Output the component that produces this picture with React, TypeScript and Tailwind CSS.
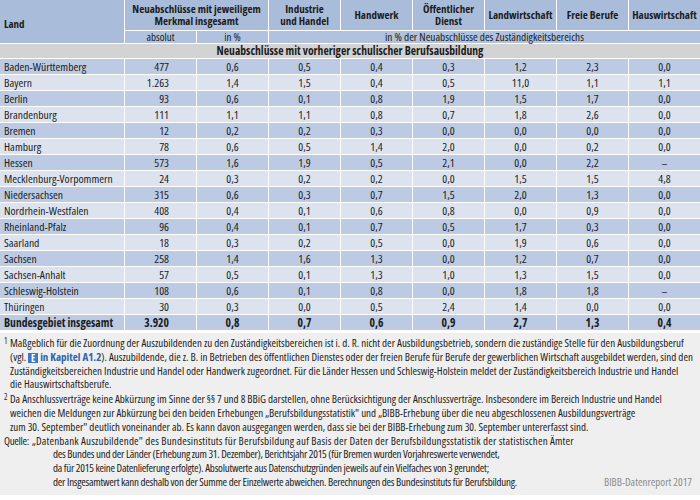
const FONT = { fontFamily: "'Open Sans', sans-serif" };

type Row = string[];

const rows: Row[] = [
  ["Baden-Württemberg", "477", "0,6", "0,5", "0,4", "0,3", "1,2", "2,3", "0,0"],
  ["Bayern", "1.263", "1,4", "1,5", "0,4", "0,5", "11,0", "1,1", "1,1"],
  ["Berlin", "93", "0,6", "0,1", "0,8", "1,9", "1,5", "1,7", "0,0"],
  ["Brandenburg", "111", "1,1", "1,1", "0,8", "0,7", "1,8", "2,6", "0,0"],
  ["Bremen", "12", "0,2", "0,2", "0,3", "0,0", "0,0", "0,0", "0,0"],
  ["Hamburg", "78", "0,6", "0,5", "1,4", "2,0", "0,0", "0,2", "0,0"],
  ["Hessen", "573", "1,6", "1,9", "0,5", "2,1", "0,0", "2,2", "–"],
  ["Mecklenburg-Vorpommern", "24", "0,3", "0,2", "0,2", "0,0", "1,5", "1,5", "4,8"],
  ["Niedersachsen", "315", "0,6", "0,3", "0,7", "1,5", "2,0", "1,3", "0,0"],
  ["Nordrhein-Westfalen", "408", "0,4", "0,1", "0,6", "0,8", "0,0", "0,9", "0,0"],
  ["Rheinland-Pfalz", "96", "0,4", "0,1", "0,7", "0,5", "1,7", "0,3", "0,0"],
  ["Saarland", "18", "0,3", "0,2", "0,5", "0,0", "1,9", "0,6", "0,0"],
  ["Sachsen", "258", "1,4", "1,6", "1,3", "0,0", "1,2", "0,7", "0,0"],
  ["Sachsen-Anhalt", "57", "0,5", "0,1", "1,3", "1,0", "1,3", "1,5", "0,0"],
  ["Schleswig-Holstein", "108", "0,6", "0,1", "0,8", "0,0", "1,8", "1,8", "–"],
  ["Thüringen", "30", "0,3", "0,0", "0,5", "2,4", "1,4", "0,0", "0,0"],
  ["Bundesgebiet insgesamt", "3.920", "0,8", "0,7", "0,6", "0,9", "2,7", "1,3", "0,4"],
];

const heads = ["Industrie\nund Handel", "Handwerk", "Öffentlicher\nDienst", "Landwirtschaft", "Freie Berufe", "Hauswirtschaft"];

const App = () => {
  return (
    <div className="w-[700px] h-[500px] bg-white text-[#1c1c1c] overflow-hidden font-stretch-condensed" style={FONT}>
      <div className="grid grid-cols-[124px_repeat(8,1fr)] gap-px bg-white text-[11px] leading-[12px] whitespace-nowrap">
        <div className="row-span-2 bg-[#a9bcd9] font-bold flex items-center pl-1 pt-1">Land</div>
        <div className="col-span-2 h-[30px] bg-[#a9bcd9] font-bold flex items-center justify-center text-center">
          Neuabschlüsse mit jeweiligem<br />Merkmal insgesamt
        </div>
        {heads.map(h => (
          <div key={h} className="h-[30px] bg-[#a9bcd9] font-bold flex items-center justify-center text-center whitespace-pre-line">
            {h}
          </div>
        ))}
        <div className="h-[12px] bg-[#b0c2dd] flex items-center justify-center">absolut</div>
        <div className="h-[12px] bg-[#b0c2dd] flex items-center justify-center">in %</div>
        <div className="col-span-6 h-[12px] bg-[#b0c2dd] flex items-center justify-center text-[11.3px]">in % der Neuabschlüsse des Zuständigkeitsbereichs</div>
        <div className="col-span-9 h-[14px] bg-[#d3d3d3] font-bold flex items-center justify-center text-[11.6px]">
          Neuabschlüsse mit vorheriger schulischer Berufsausbildung
        </div>
        {rows.map((r, i) => {
          const bg = i % 2 === 0 ? "bg-[#bccae3]" : "bg-[#dce3ef]";
          const bold = i === rows.length - 1 ? "font-bold" : "";
          return r.map((c, j) => (
            <div
              key={i + "-" + j}
              className={`h-[15px] text-[11.6px] ${bg} ${bold} flex items-center ${j === 0 ? "pl-1" : j === 1 ? "justify-end pr-[27px]" : "justify-center"}`}
            >
              {c}
            </div>
          ));
        })}
      </div>

      <div className="mt-[3px] bg-[#efefef] h-[162px] px-1 pt-[3px] text-[11px] leading-[13.8px] text-[#222] whitespace-nowrap">
        <div className="flex">
          <span className="w-[6px] text-[8px] leading-[10px]">1</span>
          <div>
            <div>Maßgeblich für die Zuordnung der Auszubildenden zu den Zuständigkeitsbereichen ist i. d. R. nicht der Ausbildungsbetrieb, sondern die zuständige Stelle für den Ausbildungsberuf</div>
            <div>
              (vgl. <span className="inline-flex items-center justify-center w-[10px] h-[10px] bg-[#3b79c3] text-white font-bold text-[10px] leading-none align-[-1px]">E</span>{" "}
              <span className="font-bold text-[#2e63ad]">in Kapitel A1.2</span>). Auszubildende, die z. B. in Betrieben des öffentlichen Dienstes oder der freien Berufe für Berufe der gewerblichen Wirtschaft ausgebildet werden, sind den
            </div>
            <div>Zuständigkeitsbereichen Industrie und Handel oder Handwerk zugeordnet. Für die Länder Hessen und Schleswig-Holstein meldet der Zuständigkeitsbereich Industrie und Handel</div>
            <div>die Hauswirtschaftsberufe.</div>
          </div>
        </div>
        <div className="flex mt-[1px]">
          <span className="w-[6px] text-[8px] leading-[10px]">2</span>
          <div>
            <div>Da Anschlussverträge keine Abkürzung im Sinne der §§ 7 und 8 BBiG darstellen, ohne Berücksichtigung der Anschlussverträge. Insbesondere im Bereich Industrie und Handel</div>
            <div>weichen die Meldungen zur Abkürzung bei den beiden Erhebungen „Berufsbildungsstatistik" und „BIBB-Erhebung über die neu abgeschlossenen Ausbildungsverträge</div>
            <div>zum 30. September" deutlich voneinander ab. Es kann davon ausgegangen werden, dass sie bei der BIBB-Erhebung zum 30. September untererfasst sind.</div>
          </div>
        </div>
        <div className="flex">
          <span className="w-[28px] shrink-0 tracking-[-0.3px]">Quelle:</span>
          <div className="flex-1">
            <div className="tracking-[0.18px]">„Datenbank Auszubildende" des Bundesinstituts für Berufsbildung auf Basis der Daten der Berufsbildungsstatistik der statistischen Ämter</div>
            <div className="pl-[21px] tracking-[-0.25px]">
              <div>des Bundes und der Länder (Erhebung zum 31. Dezember), Berichtsjahr 2015 (für Bremen wurden Vorjahreswerte verwendet,</div>
              <div>da für 2015 keine Datenlieferung erfolgte). Absolutwerte aus Datenschutzgründen jeweils auf ein Vielfaches von 3 gerundet;</div>
              <div className="flex justify-between pr-1">
                <span>der Insgesamtwert kann deshalb von der Summe der Einzelwerte abweichen. Berechnungen des Bundesinstituts für Berufsbildung.</span>
                <span className="text-[#8c8c8c] tracking-normal">BIBB-Datenreport 2017</span>
              </div>
            </div>
          </div>
        </div>
      </div>
    </div>
  );
};

export default App;
